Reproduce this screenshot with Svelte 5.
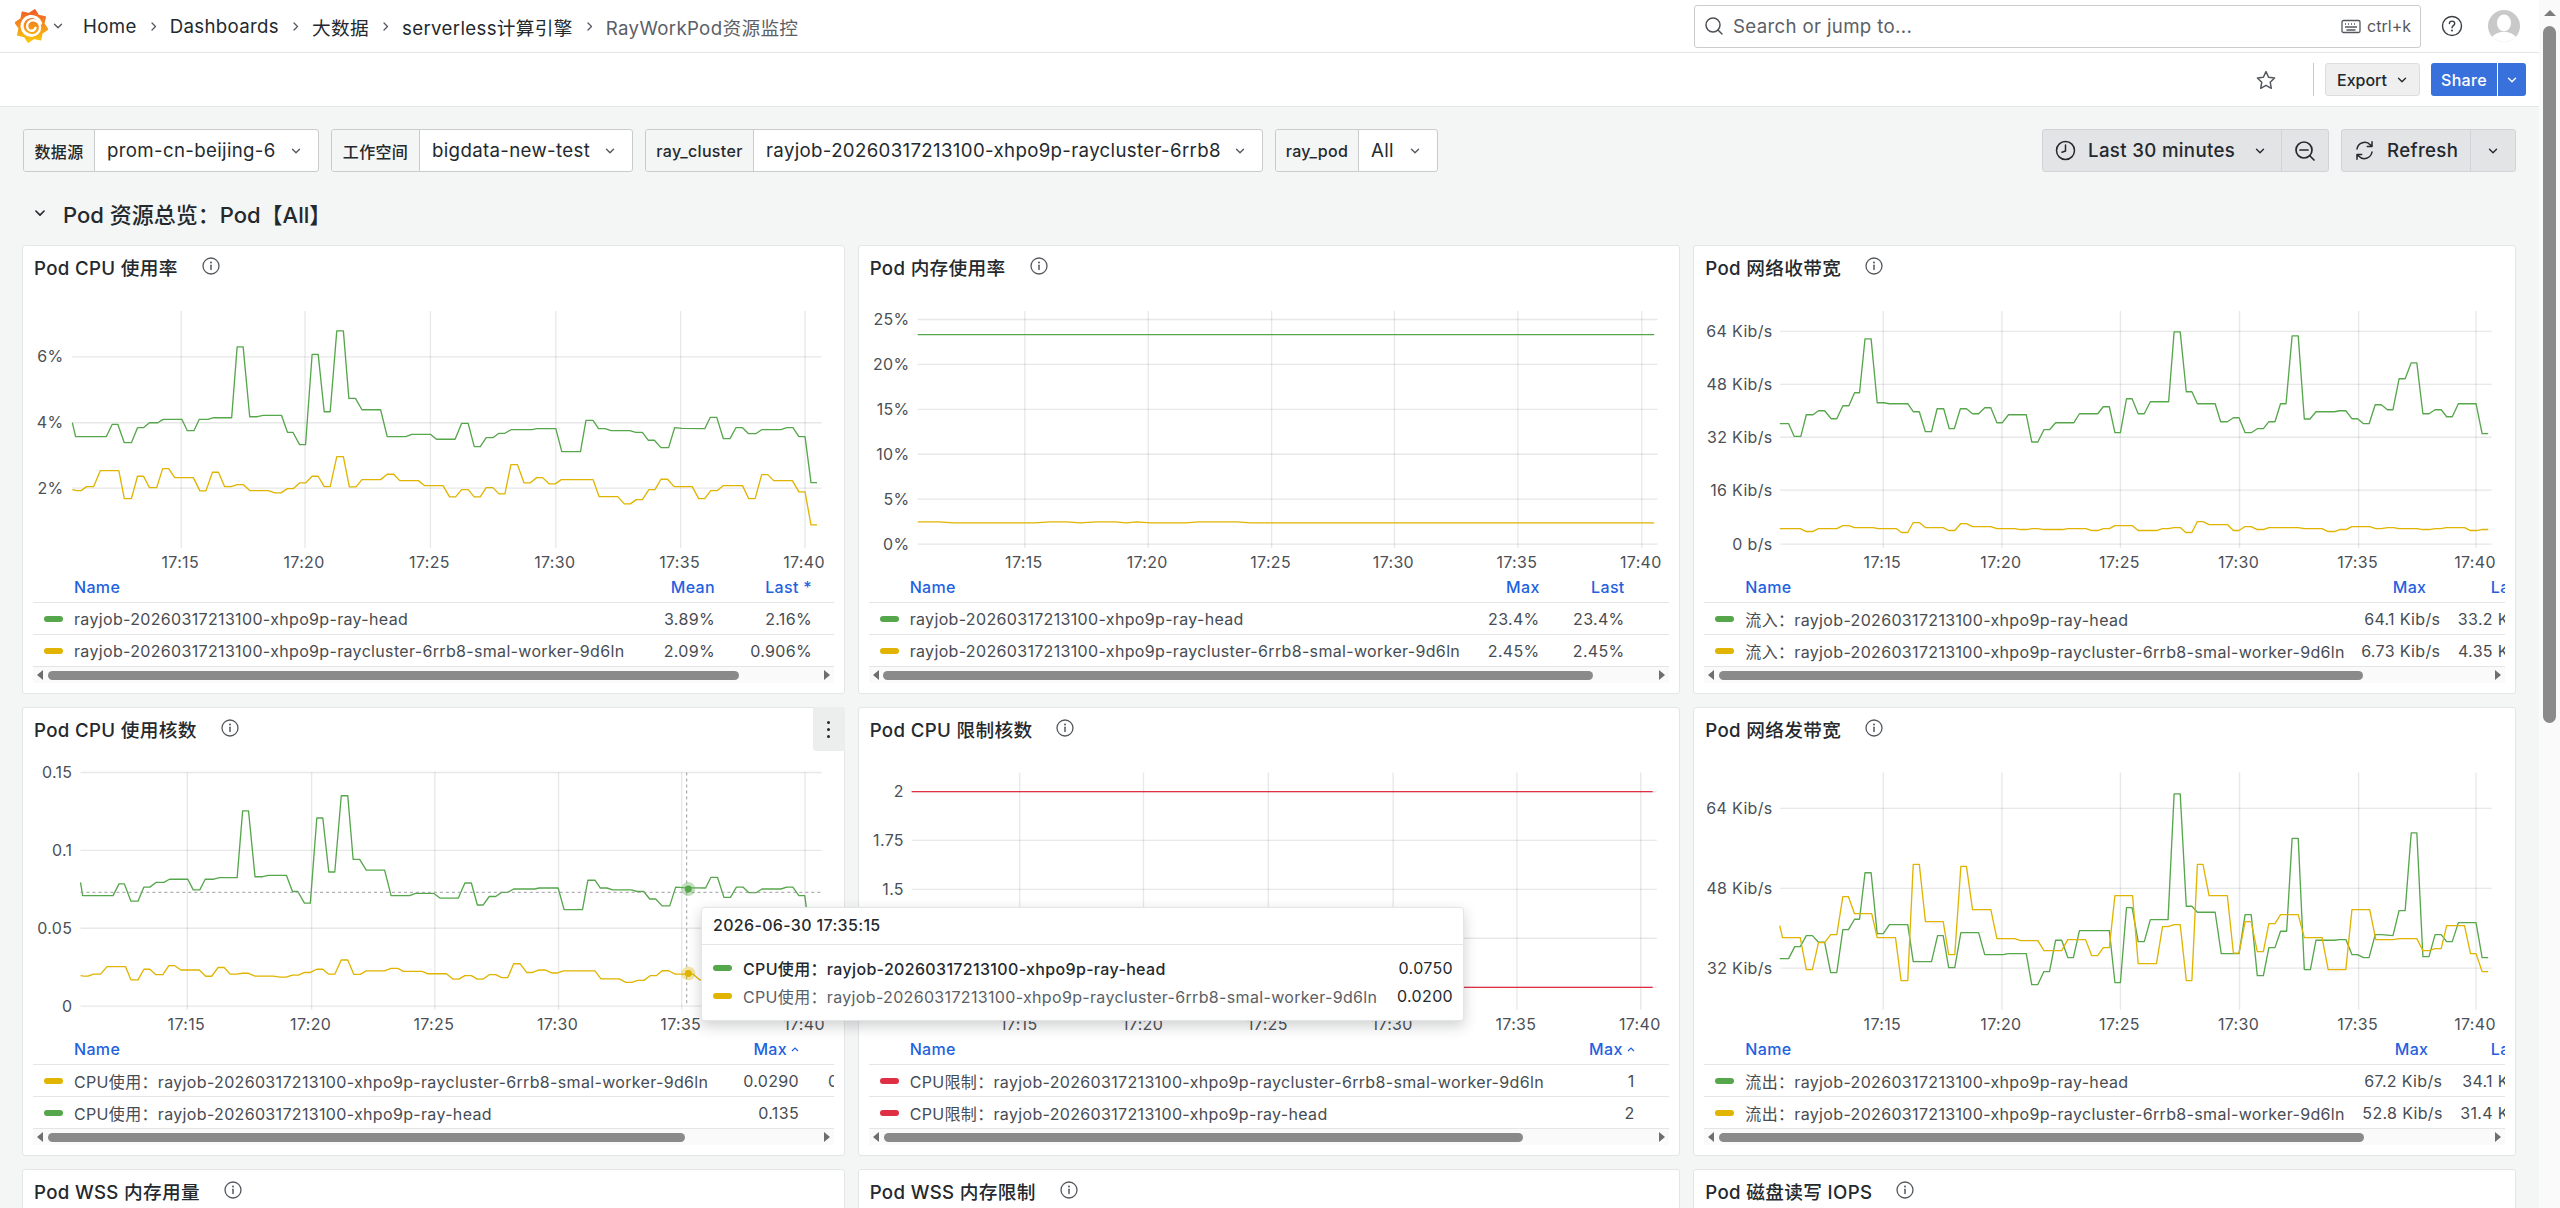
<script>
  const g1 = [132,548,138,590,194,590,205,553,215,553,227,608,240,608,251,563,262,563,273,548,288,548,298,538,332,538,342,572,354,572,364,538,380,538,390,533,423,533,433,320,444,320,456,530,470,530,480,526,514,526,525,577,535,577,547,614,558,614,570,343,581,343,592,515,603,515,615,272,627,272,637,475,649,475,661,509,695,509,707,590,741,590,752,583,786,583,797,598,831,598,843,550,855,550,866,620,877,620,888,593,900,593,911,580,922,580,933,569,972,569,980,566,1015,566,1026,635,1060,635,1070,541,1083,541,1093,566,1105,566,1116,572,1150,572,1161,577,1173,577,1184,601,1195,601,1207,623,1221,623,1232,563,1245,565,1287,566,1297,532,1309,532,1321,596,1333,596,1344,563,1356,563,1367,581,1380,581,1391,569,1426,569,1437,563,1448,563,1459,590,1470,590,1481,728,1492,728];
  const y1 = [132,749,140,752,148,752,158,740,171,740,183,692,217,692,227,776,240,776,251,709,262,709,273,743,286,743,297,686,308,686,319,713,353,713,365,753,376,753,388,697,399,697,410,740,422,740,433,734,444,734,456,752,490,752,502,759,513,759,525,746,536,746,547,729,558,729,570,709,581,709,592,740,603,740,615,650,627,650,638,741,650,741,661,719,695,719,707,703,719,703,730,722,764,722,775,737,809,737,821,771,832,771,843,749,855,749,866,771,877,771,888,743,900,743,911,762,922,762,933,674,945,674,957,729,968,729,980,713,991,713,1003,732,1014,732,1025,719,1083,719,1094,770,1128,770,1140,792,1151,792,1162,779,1173,779,1185,749,1196,749,1207,718,1219,718,1231,740,1264,740,1276,776,1287,776,1298,752,1310,752,1321,737,1356,737,1367,776,1379,776,1391,704,1402,704,1413,722,1447,722,1459,756,1470,756,1481,855,1492,855];
  const g3 = [162,551,178,551,188,589,200,589,210,524,222,524,232,512,243,512,255,536,265,536,276,497,287,497,297,458,306,458,316,296,327,296,338,488,350,488,360,491,393,491,403,515,414,515,425,575,436,575,446,506,458,506,468,566,477,566,488,506,499,506,510,521,521,521,532,503,543,503,554,548,564,548,575,524,607,524,617,606,628,606,639,569,649,569,660,548,693,548,703,521,736,521,746,500,757,500,767,578,777,578,788,476,798,476,809,521,820,521,831,485,864,485,874,275,885,275,896,455,906,455,916,491,948,491,958,545,970,545,981,533,991,533,1002,578,1013,578,1024,566,1035,566,1045,545,1056,545,1066,491,1076,491,1087,287,1098,287,1109,537,1119,537,1130,515,1163,515,1173,512,1184,512,1195,536,1205,536,1216,551,1226,551,1237,494,1248,494,1259,509,1269,509,1280,416,1291,416,1302,368,1312,368,1323,521,1334,521,1345,509,1356,509,1366,530,1376,530,1387,491,1419,491,1430,581,1441,581];
  const y3 = [162,866,199,866,210,875,221,875,232,866,265,866,276,857,287,857,297,863,330,863,340,866,372,866,382,878,393,878,403,848,414,848,425,863,457,863,467,872,478,872,489,851,499,851,510,860,543,860,554,866,586,866,597,869,607,869,618,866,628,866,639,869,672,869,682,866,715,866,725,872,736,872,746,866,757,866,767,857,798,857,809,872,842,872,853,866,863,866,874,863,885,863,895,878,906,878,916,845,926,845,937,854,970,854,981,872,991,872,1002,860,1013,860,1024,869,1035,869,1045,863,1098,863,1109,866,1141,866,1152,875,1163,875,1173,869,1184,869,1195,860,1227,860,1238,866,1248,866,1259,863,1270,863,1280,866,1312,866,1323,869,1334,869,1345,866,1355,866,1366,863,1398,863,1409,872,1419,872,1430,869,1441,869];
  const g6 = [162,776,178,776,189,740,199,740,210,707,221,707,232,727,243,727,254,818,265,818,276,689,286,689,297,658,306,658,316,518,327,518,338,701,349,701,360,674,393,674,403,785,436,785,447,707,457,707,467,803,478,803,489,698,521,698,532,764,565,764,575,761,607,761,617,854,628,854,639,815,649,815,660,721,671,721,682,773,692,773,703,692,757,692,767,848,777,848,788,623,798,623,809,725,820,725,831,659,863,659,874,281,885,281,896,619,906,619,916,637,948,637,959,761,991,761,1002,644,1013,644,1024,827,1035,827,1045,743,1056,743,1066,694,1077,694,1087,415,1098,415,1109,809,1120,809,1130,721,1163,721,1173,719,1184,719,1195,764,1205,764,1216,773,1226,773,1237,704,1248,704,1269,707,1280,632,1291,632,1302,398,1312,398,1323,770,1334,770,1345,704,1356,704,1366,725,1376,725,1387,668,1419,668,1430,773,1441,773];
  const y6 = [162,677,167,713,199,713,210,809,221,809,232,728,243,728,254,704,265,704,276,590,286,590,297,641,328,641,338,713,371,713,381,842,393,842,403,493,414,493,425,665,457,665,467,764,478,764,489,499,499,499,510,629,543,629,554,716,586,716,597,722,628,722,639,752,671,752,682,719,714,719,725,767,736,767,746,743,757,743,767,587,799,587,809,791,842,791,853,680,863,680,874,674,885,674,896,842,906,842,916,493,926,493,937,587,970,587,981,760,991,760,1002,665,1013,665,1024,755,1035,755,1045,671,1056,671,1066,644,1098,644,1109,713,1141,713,1152,809,1184,809,1195,629,1227,629,1238,719,1269,719,1280,716,1312,716,1323,752,1334,752,1345,746,1356,746,1366,677,1398,677,1409,761,1419,761,1430,815,1441,815];

  const cores = (arr, factor) => {
    const out = [];
    for (let i = 0; i < arr.length; i += 2) {
      const p = 2 + (745 - arr[i + 1]) / 98.75;
      out.push(Math.max(147, 342 + (arr[i] - 331) * 0.99), 919 - p * factor);
    }
    return out;
  };
  const g2 = [125,283.5,1486,283.5];
  const y2 = [125,846,165,846,190,849,340,849,370,846,400,846,425,849,455,846,490,846,510,849,530,846,555,849,620,849,645,846,715,846,740,849,1486,849];

  const GREEN = '#56a64b', YELLOW = '#e0b400', RED = '#e02f44';
  const times = ['17:15', '17:20', '17:25', '17:30', '17:35', '17:40'];
  const long = 'rayjob-20260317213100-xhpo9p-raycluster-6rrb8-smal-worker-9d6ln';
  const short = 'rayjob-20260317213100-xhpo9p-ray-head';

  const charts = [
    { px: 22, py: 245, ox: 0, kx: 1568 / 860, oy: 240, title: 'Pod CPU 使用率',
      v: [331, 557, 786, 1015, 1243, 1470], h: [[350, '6%'], [548, '4%'], [745, '2%']], hl: 132, hr: 1500, lr: 116, top: 212, bot: 925,
      series: [[g1, GREEN], [y1, YELLOW]],
      heads: ['Mean', 'Last *'], rights: [682, 779], off: 0, thumb: [18, 691],
      rows: [[GREEN, short, '3.89%', '2.16%'], [YELLOW, long, '2.09%', '0.906%']] },
    { px: 858, py: 245, ox: 850, kx: 1568 / 850, oy: 240, title: 'Pod 内存使用率',
      v: [323, 551, 779, 1006, 1234, 1463], h: [[238, '25%'], [373, '20%'], [508, '15%'], [643, '10%'], [778, '5%'], [913, '0%']], hl: 125, hr: 1492, lr: 110, top: 212, bot: 925,
      series: [[g2, GREEN], [y2, YELLOW]],
      heads: ['Max', 'Last'], rights: [671, 756], off: 0, thumb: [17, 710],
      rows: [[GREEN, short, '23.4%', '23.4%'], [YELLOW, long, '2.45%', '2.45%']] },
    { px: 1693, py: 245, ox: 1690, kx: 1568 / 870, oy: 240, title: 'Pod 网络收带宽',
      v: [349, 563, 777, 992, 1207, 1419], h: [[274, '64 Kib/s'], [433, '48 Kib/s'], [592, '32 Kib/s'], [751, '16 Kib/s'], [913, '0 b/s']], hl: 163, hr: 1447, lr: 149, top: 212, bot: 925,
      series: [[g3, GREEN], [y3, YELLOW]],
      heads: ['Max', 'Last'], rights: [736, 834], off: 14, thumb: [18, 644],
      rows: [[GREEN, '流入：' + short, '64.1 Kib/s', '33.2 Kib/s'], [YELLOW, '流入：' + long, '6.73 Kib/s', '4.35 Kib/s']] },
    { px: 22, py: 707, ox: 0, kx: 1568 / 860, oy: 700, title: 'Pod CPU 使用核数', menu: true, cross: true,
      v: [342, 569, 794, 1020, 1245, 1470], h: [[217, '0.15'], [451, '0.1'], [685, '0.05'], [919, '0']], hl: 147, hr: 1500, lr: 132, top: 217, bot: 930,
      series: [[cores(g1, 93.1), GREEN], [cores(y1, 46.8), YELLOW]],
      heads: ['Max', ''], sort: true, rights: [766, 847], off: 0, thumb: [18, 637],
      rows: [[YELLOW, 'CPU使用：' + long, '0.0290', '0.0122'], [GREEN, 'CPU使用：' + short, '0.135', '0.107']] },
    { px: 858, py: 707, ox: 860, kx: 3, oy: 710, title: 'Pod CPU 限制核数',
      v: [480, 852, 1227, 1602, 1974, 2346], h: [[245, '2'], [391, '1.75'], [538, '1.5'], [685, '1.25'], [832, '1']], hl: 155, hr: 2394, lr: 132, top: 187, bot: 900,
      series: [[[155, 244.5, 2382, 244.5], RED], [[155, 832.5, 2382, 832.5], RED]],
      heads: ['Max'], sort: true, rights: [766], off: 0, thumb: [18, 639],
      rows: [[RED, 'CPU限制：' + long, '1'], [RED, 'CPU限制：' + short, '2']] },
    { px: 1693, py: 707, ox: 1690, kx: 1568 / 870, oy: 700, title: 'Pod 网络发带宽',
      v: [349, 563, 777, 992, 1207, 1419], h: [[325, '64 Kib/s'], [565, '48 Kib/s'], [805, '32 Kib/s']], hl: 163, hr: 1447, lr: 149, top: 217, bot: 930,
      series: [[g6, GREEN], [y6, YELLOW]],
      heads: ['Max', 'Last'], rights: [738, 834], off: 14, thumb: [18, 645],
      rows: [[GREEN, '流出：' + short, '67.2 Kib/s', '34.1 Kib/s'], [YELLOW, '流出：' + long, '52.8 Kib/s', '31.4 Kib/s']] }
  ];

  const X = (c, z) => +(c.ox + z / c.kx - c.px).toFixed(1);
  const Y = (c, z) => +(c.oy + z / 3 - c.py - 44).toFixed(1);
  const pts = (c, arr) => {
    const s = [];
    for (let i = 0; i < arr.length; i += 2) s.push(X(c, arr[i]) + ',' + Y(c, arr[i + 1]));
    return s.join(' ');
  };
  const cols = (c) => {
    const parts = ['41px', c.rights[0] - 41 - 80 + 'px', '80px'];
    for (let i = 1; i < c.rights.length; i++) parts.push(c.rights[i] - c.rights[i - 1] + 'px');
    return parts.join(' ');
  };

  const starPts = (() => {
    const out = [];
    const n = 8;
    for (let i = 0; i < n * 2; i++) {
      const a = (i / (n * 2)) * Math.PI * 2 - Math.PI / 2 + 0.2;
      const r = i % 2 ? 12.5 : 16.5;
      out.push((16.5 + r * Math.cos(a)).toFixed(1) + ',' + (17 + r * Math.sin(a)).toFixed(1));
    }
    return out.join(' ');
  })();
</script>

{#snippet chev(size = 12, color = '#24292e')}
  <svg class="ico" width={size} height={size} viewBox="0 0 12 12" fill="none"><path d="M2.5 4.3 6 7.8l3.5-3.5" stroke={color} stroke-width="1.4" stroke-linecap="round" stroke-linejoin="round" /></svg>
{/snippet}

{#snippet info()}
  <svg class="ico" width="18" height="18" viewBox="0 0 18 18" fill="none"><circle cx="9" cy="9" r="8" stroke="#54585e" stroke-width="1.3" /><path d="M9 8.3v4.2" stroke="#54585e" stroke-width="1.5" stroke-linecap="round" /><circle cx="9" cy="5.6" r="1" fill="#54585e" /></svg>
{/snippet}

{#snippet sep()}
  <svg class="ico sep" width="13" height="13" viewBox="0 0 13 13" fill="none"><path d="M5 3l3.5 3.5L5 10" stroke="#54585e" stroke-width="1.3" stroke-linecap="round" stroke-linejoin="round" /></svg>
{/snippet}

<div class="page">
  <div class="main">
    <header class="nav">
      <svg class="logo" width="33" height="34" viewBox="0 0 33 34">
        <defs>
          <linearGradient id="gf" x1="0" y1="0" x2="0" y2="1"><stop offset="0" stop-color="#ef5a28" /><stop offset="1" stop-color="#fbc90c" /></linearGradient>
        </defs>
        <polygon points={starPts} fill="url(#gf)" stroke="url(#gf)" stroke-width="1.5" stroke-linejoin="round" />
        <path d="M25.6 14.2A9.5 9.5 0 1 0 16.5 26.5" fill="none" stroke="#fff" stroke-width="3.2" stroke-linecap="round" />
        <path d="M16.5 26.5c5 0 8.6-3.6 8.6-8 0-4.4-3.4-7.2-7-7.2-3.4 0-6 2.6-6 5.6 0 2.8 2 4.8 4.6 4.8 2 0 3.4-1.2 3.8-2.8" fill="none" stroke="#fff" stroke-width="2.4" stroke-linecap="round" />
      </svg>
      <span class="logochev">{@render chev(12, '#54585e')}</span>
      <nav class="crumbs">
        <span>Home</span>{@render sep()}<span>Dashboards</span>{@render sep()}<span>大数据</span>{@render sep()}<span>serverless计算引擎</span>{@render sep()}<span class="cur">RayWorkPod资源监控</span>
      </nav>
      <div class="search">
        <svg class="ico" width="22" height="22" viewBox="0 0 22 22" fill="none"><circle cx="10" cy="10" r="7" stroke="#4d5157" stroke-width="1.5" /><path d="M15 15l4 4" stroke="#4d5157" stroke-width="1.5" stroke-linecap="round" /></svg>
        <span class="ph">Search or jump to...</span>
        <svg class="ico kb" width="20" height="15" viewBox="0 0 20 15" fill="none"><rect x="1" y="1.5" width="18" height="12" rx="1.5" stroke="#54585e" stroke-width="1.3" /><path d="M4 5h1M7 5h1M10 5h1M13 5h1M16 5h0M4 8h12M5.5 11h9" stroke="#54585e" stroke-width="1.3" /></svg>
        <span class="kbd">ctrl+k</span>
      </div>
      <svg class="ico help" width="22" height="22" viewBox="0 0 22 22" fill="none"><circle cx="11" cy="11" r="9.5" stroke="#3c4046" stroke-width="1.4" /><path d="M8.4 8.6c0-1.5 1.2-2.5 2.7-2.5s2.6 1 2.6 2.3c0 2.2-2.7 2.2-2.7 4.4" stroke="#3c4046" stroke-width="1.4" fill="none" stroke-linecap="round" /><circle cx="11" cy="15.6" r="1" fill="#3c4046" /></svg>
      <svg class="ico avatar" width="32" height="32" viewBox="0 0 32 32"><clipPath id="av"><circle cx="16" cy="16" r="16" /></clipPath><g clip-path="url(#av)"><rect width="32" height="32" fill="#c9c9c9" /><ellipse cx="16" cy="13" rx="7" ry="8.5" fill="#fff" /><path d="M2 32c1-7 7-9 11-10h6c4 1 10 3 11 10z" fill="#fff" /></g></svg>
    </header>

    <div class="tools">
      <svg class="ico star" width="22" height="22" viewBox="0 0 22 22" fill="none"><path d="M11 2.6l2.6 5.6 6 .8-4.4 4.2 1.1 6.1L11 16.3l-5.3 3 1.1-6.1L2.4 9l6-.8z" stroke="#54585e" stroke-width="1.5" stroke-linejoin="round" /></svg>
      <span class="divider"></span>
      <button class="export"><span>Export</span>{@render chev(12)}</button>
      <div class="share"><span class="sh1">Share</span><span class="sh2">{@render chev(12, '#fff')}</span></div>
    </div>

    <div class="content">
      <div class="controls">
        <div class="vars">
          <div class="var v1"><span class="lab w1">数据源</span><span class="val">prom-cn-beijing-6</span>{@render chev(12, '#54585e')}</div>
          <div class="var v2"><span class="lab w2">工作空间</span><span class="val">bigdata-new-test</span>{@render chev(12, '#54585e')}</div>
          <div class="var v3"><span class="lab w3">ray_cluster</span><span class="val">rayjob-20260317213100-xhpo9p-raycluster-6rrb8</span>{@render chev(12, '#54585e')}</div>
          <div class="var v4"><span class="lab w4">ray_pod</span><span class="val">All</span>{@render chev(12, '#54585e')}</div>
        </div>
        <div class="timebar">
          <div class="btngroup tp">
            <div class="bmain">
              <svg class="ico" width="21" height="21" viewBox="0 0 21 21" fill="none"><circle cx="10.5" cy="10.5" r="9" stroke="#24292e" stroke-width="1.5" /><path d="M10.5 5v6L7 12.2" stroke="#24292e" stroke-width="1.5" stroke-linecap="round" stroke-linejoin="round" /></svg>
              <span class="btxt">Last 30 minutes</span>{@render chev(12)}
            </div>
            <div class="bside zo">
              <svg class="ico" width="22" height="22" viewBox="0 0 22 22" fill="none"><circle cx="10" cy="10" r="8" stroke="#24292e" stroke-width="1.7" /><path d="M6 10h8M16 16l4 4" stroke="#24292e" stroke-width="1.7" stroke-linecap="round" /></svg>
            </div>
          </div>
          <div class="btngroup rf">
            <div class="bmain">
              <svg class="ico" width="21" height="21" viewBox="0 0 21 21" fill="none"><path d="M3 9a7.8 7.8 0 0 1 13.4-4.1L18 6.5M18 1.8v4.7h-4.7M18 12a7.8 7.8 0 0 1-13.4 4.1L3 14.5M3 19.2v-4.7h4.7" stroke="#24292e" stroke-width="1.5" stroke-linecap="round" stroke-linejoin="round" /></svg>
              <span class="btxt">Refresh</span>
            </div>
            <div class="bside rc">{@render chev(12)}</div>
          </div>
        </div>
      </div>

      <div class="rowtitle">{@render chev(14)}<span>Pod 资源总览：Pod【All】</span></div>

      <div class="grid">
        {#each charts as c}
          <section class="panel">
            <div class="phead"><span class="ptitle">{c.title}</span>{@render info()}</div>
            {#if c.menu}
              <div class="menu"><i></i><i></i><i></i></div>
            {/if}
            <svg class="chart" width="100%" height="282" viewBox="0 0 822 282">
              {#each c.h as [yy, label]}
                <line x1={X(c, c.hl)} x2={X(c, c.hr)} y1={Y(c, yy)} y2={Y(c, yy)} class="gl" />
                <text x={X(c, c.lr)} y={Y(c, yy)} class="tk" text-anchor="end" dominant-baseline="central">{label}</text>
              {/each}
              {#each c.v as xx, i}
                <line x1={X(c, xx)} x2={X(c, xx)} y1={Y(c, c.top)} y2={Y(c, c.bot)} class="gl" />
                <text x={X(c, xx) - 1} y="274" class="tk" text-anchor="middle" dominant-baseline="central">{times[i]}</text>
              {/each}
              {#each c.series as [arr, color]}
                <polyline points={pts(c, arr)} fill="none" stroke={color} stroke-width="1.33" stroke-linejoin="round" />
              {/each}
              {#if c.cross}
                <line x1={X(c, 1254)} x2={X(c, 1254)} y1={Y(c, 217)} y2={Y(c, 919)} class="cr" />
                <line x1={X(c, 147)} x2={X(c, 1500)} y1={Y(c, 577)} y2={Y(c, 577)} class="cr" />
                <circle cx={X(c, 1257)} cy={Y(c, 567)} r="7" fill={GREEN} opacity=".35" />
                <circle cx={X(c, 1257)} cy={Y(c, 567)} r="3.5" fill={GREEN} />
                <circle cx={X(c, 1257)} cy={Y(c, 821)} r="7" fill={YELLOW} opacity=".35" />
                <circle cx={X(c, 1257)} cy={Y(c, 821)} r="3.5" fill={YELLOW} />
              {/if}
            </svg>
            <div class="legend">
              <div class="clip">
                <div class="lrow lhead" style={`grid-template-columns:${cols(c)}`}>
                  <span></span><span class="nm">Name</span>
                  {#each c.heads as h}
                    <span class="v" style={`padding-right:${c.off}px`}>{h}{#if c.sort && h}<svg class="caret" width="8" height="6" viewBox="0 0 8 6" fill="none"><path d="M1 5l3-3 3 3" stroke="#1f62e0" stroke-width="1.2" /></svg>{/if}</span>
                  {/each}
                </div>
                {#each c.rows as r}
                  <div class="lrow lbody" style={`grid-template-columns:${cols(c)}`}>
                    <span class="sw" style={`background:${r[0]}`}></span>
                    <span class="nm">{r[1]}</span>
                    {#each r.slice(2) as val}
                      <span class="v">{val}</span>
                    {/each}
                  </div>
                {/each}
              </div>
              <div class="sb">
                <span class="al"></span>
                <span class="thumb" style={`margin-left:${c.thumb[0] - 13}px;width:${c.thumb[1]}px`}></span>
                <span class="ar"></span>
              </div>
            </div>
          </section>
        {/each}
        <section class="panel"><div class="phead"><span class="ptitle">Pod WSS 内存用量</span>{@render info()}</div></section>
        <section class="panel"><div class="phead"><span class="ptitle">Pod WSS 内存限制</span>{@render info()}</div></section>
        <section class="panel"><div class="phead"><span class="ptitle">Pod 磁盘读写 IOPS</span>{@render info()}</div></section>

        <div class="tooltip">
          <div class="tthead">2026-06-30 17:35:15</div>
          <div class="ttbody">
            <div class="ttrow on"><span class="sw" style={`background:${GREEN}`}></span><span class="ttn">CPU使用：{short}</span><span class="ttv">0.0750</span></div>
            <div class="ttrow"><span class="sw" style={`background:${YELLOW}`}></span><span class="ttn">CPU使用：{long}</span><span class="ttv">0.0200</span></div>
          </div>
        </div>
      </div>
    </div>
  </div>
  <aside class="vscroll"><span class="up"></span><span class="vthumb"></span></aside>
</div>

<style>
  :global(body) { margin: 0; overflow: hidden; background: #f4f5f5; }
  .page { display: flex; width: 2560px; height: 1208px; overflow: hidden; font-family: Inter, "Noto Sans CJK SC", sans-serif; color: #24292e; font-size: 18.67px; letter-spacing: 0.018em; }
  .main { width: 2539px; flex: none; display: flex; flex-direction: column; }
  .ico { flex: none; display: block; }

  .nav { height: 52px; flex: none; display: flex; align-items: center; background: #fff; border-bottom: 1px solid #e4e5e7; padding-left: 15px; padding-right: 19px; }
  .logo { flex: none; }
  .logochev { margin-left: 4px; width: 31px; }
  .crumbs { display: flex; align-items: center; white-space: nowrap; }
  .crumbs .sep { margin: 0 10px; }
  .crumbs .cur { color: #5b6066; }
  .search { margin-left: auto; width: 727px; height: 43px; box-sizing: border-box; border: 1px solid #c9cbcd; border-radius: 3px; display: flex; align-items: center; padding: 0 9px 0 8px; background: #fff; }
  .ph { color: #5b6066; margin-left: 8px; flex: 1; }
  .kb { margin-right: 6px; }
  .kbd { font-size: 16px; color: #54585e; letter-spacing: 0; }
  .help { margin-left: 20px; }
  .avatar { margin-left: 25px; }

  .tools { height: 53px; flex: none; display: flex; align-items: center; justify-content: flex-end; background: #fff; border-bottom: 1px solid #e4e5e7; padding-right: 13px; }
  .divider { width: 1px; height: 33px; background: #c9cbcd; margin: 0 11px 0 36px; }
  .export { width: 95px; height: 33px; box-sizing: border-box; border: 1px solid #dcdde0; background: #efeff0; border-radius: 3px; font: 500 16px Inter, sans-serif; color: #24292e; display: flex; align-items: center; justify-content: center; gap: 9px; padding: 0; }
  .share { display: flex; margin-left: 11px; height: 33px; color: #fff; font-weight: 500; font-size: 16px; }
  .sh1 { width: 66px; background: #3871dc; border-radius: 3px 0 0 3px; display: flex; align-items: center; justify-content: center; }
  .sh2 { width: 28px; margin-left: 1px; background: #3871dc; border-radius: 0 3px 3px 0; display: flex; align-items: center; justify-content: center; }

  .content { flex: 1; padding: 22px 23px 0 22px; min-height: 0; }
  .controls { display: flex; justify-content: space-between; }
  .vars { display: flex; gap: 12px; margin-left: 1px; }
  .var { display: flex; align-items: center; height: 43px; box-sizing: border-box; border: 1px solid #c9cbcd; border-radius: 3px; background: #fff; padding-right: 16px; white-space: nowrap; }
  .v1 { width: 296px; } .v2 { width: 302px; } .v3 { width: 618px; } .v4 { width: 163px; }
  .lab { height: 100%; display: flex; align-items: center; justify-content: center; box-sizing: border-box; background: #f4f5f5; border-right: 1px solid #c9cbcd; font-size: 16px; font-weight: 500; border-radius: 3px 0 0 3px; flex: none; }
  .w1 { width: 71px; } .w2 { width: 88px; } .w3 { width: 108px; } .w4 { width: 83px; }
  .val { padding: 0 12px; flex: 1; }
  .timebar { display: flex; gap: 12px; }
  .btngroup { display: flex; height: 43px; box-sizing: border-box; border: 1px solid #d2d3d6; border-radius: 3px; background: #e3e4e6; }
  .bmain { display: flex; align-items: center; padding-left: 12px; white-space: nowrap; font-weight: 500; border-right: 1px solid #d2d3d6; box-sizing: border-box; }
  .tp .bmain { width: 239px; padding-right: 15px; justify-content: flex-start; }
  .tp .bmain :global(svg:last-child) { margin-left: auto; }
  .rf .bmain { width: 129px; }
  .btxt { margin-left: 12px; }
  .bside { display: flex; align-items: center; justify-content: center; }
  .zo { width: 46px; } .rc { width: 44px; }

  .rowtitle { height: 40px; display: flex; align-items: center; margin: 21px 0 12px; padding-left: 11px; font-weight: 500; font-size: 22px; gap: 16px; letter-spacing: 0; }

  .grid { position: relative; display: grid; grid-template-columns: repeat(3, 1fr); grid-auto-rows: 449px; gap: 13px; }
  .panel { position: relative; background: #fff; border: 1px solid #e4e5e7; border-radius: 3px; box-sizing: border-box; display: flex; flex-direction: column; min-width: 0; }
  .phead { height: 43px; flex: none; display: flex; align-items: center; box-sizing: border-box; padding: 0 0 3px 11px; gap: 24px; }
  .ptitle { font-weight: 500; font-size: 18.67px; white-space: nowrap; }
  .menu { position: absolute; right: -1px; top: -1px; width: 32px; height: 44px; background: #eceded; border-radius: 3px; display: flex; flex-direction: column; align-items: center; justify-content: center; gap: 4px; }
  .menu i { width: 3px; height: 3px; border-radius: 50%; background: #24292e; }
  .chart { display: block; flex: none; margin-left: -1px; }
  .gl { stroke: rgba(36, 41, 46, 0.11); stroke-width: 1.33; }
  .cr { stroke: #9a9c9f; stroke-width: 1; stroke-dasharray: 3 3; }
  .tk { font-size: 16px; fill: #4b5056; font-family: Inter, sans-serif; }
  .legend { padding: 0 10px; }
  .clip { overflow: hidden; font-size: 16px; }
  .lrow { display: grid; height: 32px; align-items: center; box-sizing: border-box; white-space: nowrap; }
  .lhead { color: #1f62e0; font-weight: 500; border-bottom: 1px solid #e4e5e7; }
  .lbody { color: #474c52; border-bottom: 1px solid #e4e5e7; }
  .sw { display: block; width: 19px; height: 6px; border-radius: 3px; margin-left: 11px; }
  .v { text-align: right; }
  .caret { margin-left: 4px; vertical-align: 3px; }
  .sb { height: 16px; display: flex; align-items: center; background: #fafafa; position: relative; }
  .al, .ar { width: 0; height: 0; border-top: 5px solid transparent; border-bottom: 5px solid transparent; flex: none; }
  .al { border-right: 6px solid #6e6e6e; margin-left: 4px; }
  .ar { border-left: 6px solid #6e6e6e; margin-left: auto; margin-right: 4px; }
  .thumb { height: 9px; border-radius: 5px; background: #8a8a8a; flex: none; margin-right: 0; }

  .tooltip { position: absolute; left: 679px; top: 662px; width: 763px; height: 114px; background: #fff; border: 1px solid #e4e5e7; border-radius: 3px; box-shadow: 0 5px 14px rgba(36, 41, 46, 0.22); box-sizing: border-box; font-size: 16px; }
  .tthead { height: 36px; display: flex; align-items: center; padding-left: 11px; padding-bottom: 2px; box-sizing: content-box; height: 34px; border-bottom: 1px solid #e4e5e7; font-weight: 500; }
  .ttbody { padding-top: 9px; }
  .ttrow { display: flex; align-items: center; height: 28px; padding: 0 10px 0 0; color: #5b6066; white-space: nowrap; }
  .ttrow .sw { margin-right: 11px; }
  .ttrow.on { color: #24292e; font-weight: 500; }
  .ttn { flex: 1; }
  .ttv { color: #24292e; font-weight: 400; }

  .vscroll { flex: 1; background: #fafafa; position: relative; display: flex; flex-direction: column; align-items: center; }
  .up { width: 0; height: 0; border-left: 6px solid transparent; border-right: 6px solid transparent; border-bottom: 6px solid #7c7c7c; margin-top: 10px; }
  .vthumb { width: 13px; height: 697px; background: #8a8a8a; border-radius: 7px; margin-top: 10px; }
</style>
